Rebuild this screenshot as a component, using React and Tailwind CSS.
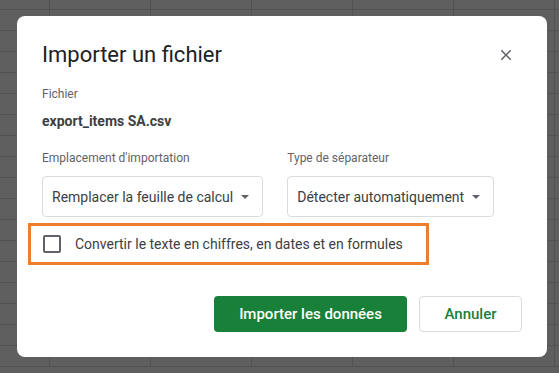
import React from "react";

const cols = [0, 1, 2, 3, 4, 5, 6];
const rows = Array.from({ length: 18 }, (_, i) => i);

function Caret() {
  return (
    <svg width="8" height="4" viewBox="0 0 8 4" className="shrink-0">
      <path d="M0 0h8L4 4z" fill="#5f6368" />
    </svg>
  );
}

function Select({ label, value }) {
  return (
    <div className="flex flex-col items-start">
      <div className="text-[12px] leading-[16px] text-[#5f6368]">{label}</div>
      <div className="mt-[10px] flex h-[41px] items-center gap-[8px] rounded-[4px] border border-[#dadce0] pl-[9px] pr-[13px]">
        <span className="text-[14px] leading-[20px] text-[#3c4043]">{value}</span>
        <Caret />
      </div>
    </div>
  );
}

export default function App() {
  return (
    <div className="relative h-[373px] w-[559px] overflow-hidden bg-[#5f5f5f]" style={{ fontFamily: "Roboto, 'Liberation Sans', sans-serif" }}>
      <div className="grid grid-cols-[50px_101px_101px_101px_101px_101px_101px] grid-rows-[10px_repeat(17,21px)]">
        {rows.map((r) =>
          cols.map((c) => (
            <div key={r + "-" + c} className="border-b border-r border-[#525252]" />
          ))
        )}
      </div>

      <div className="absolute left-[17px] top-[16px] flex h-[341px] w-[530px] flex-col rounded-[8px] bg-white pl-[25px] pr-[25px] pt-[25px]">
        <div className="flex items-center justify-between">
          <div className="text-[22px] leading-[28px] text-[#202124]">Importer un fichier</div>
          <svg width="18" height="18" viewBox="0 0 24 24" className="mr-[7px]">
            <path
              d="M19 6.41 17.59 5 12 10.59 6.41 5 5 6.41 10.59 12 5 17.59 6.41 19 12 13.41 17.59 19 19 17.59 13.41 12z"
              fill="#5f6368"
            />
          </svg>
        </div>

        <div className="mt-[17px] text-[12px] leading-[16px] text-[#5f6368]">Fichier</div>
        <div className="mt-[9px] text-[14px] font-bold leading-[20px] text-[#3c4043]">export_items SA.csv</div>

        <div className="mt-[19px] flex gap-[24px]">
          <Select label="Emplacement d'importation" value="Remplacer la feuille de calcul" />
          <Select label="Type de séparateur" value="Détecter automatiquement" />
        </div>

        <div className="-ml-[14px] mt-[6px] flex h-[42px] w-[401px] items-center gap-[14px] border-[3px] border-[#ed7d31] pl-[12px]">
          <div className="h-[18px] w-[18px] rounded-[2px] border-2 border-[#5f6368]" />
          <span className="text-[14px] leading-[20px] text-[#3c4043]">
            Convertir le texte en chiffres, en dates et en formules
          </span>
        </div>

        <div className="mt-[31px] flex justify-end gap-[12px]">
          <button className="flex h-[36px] w-[193px] items-center justify-center rounded-[4px] bg-[#188038] text-[15px] font-medium leading-[20px] text-white">
            Importer les données
          </button>
          <button className="flex h-[36px] w-[103px] items-center justify-center rounded-[4px] border border-[#dadce0] bg-white text-[15px] font-medium leading-[20px] text-[#188038]">
            Annuler
          </button>
        </div>
      </div>
    </div>
  );
}
